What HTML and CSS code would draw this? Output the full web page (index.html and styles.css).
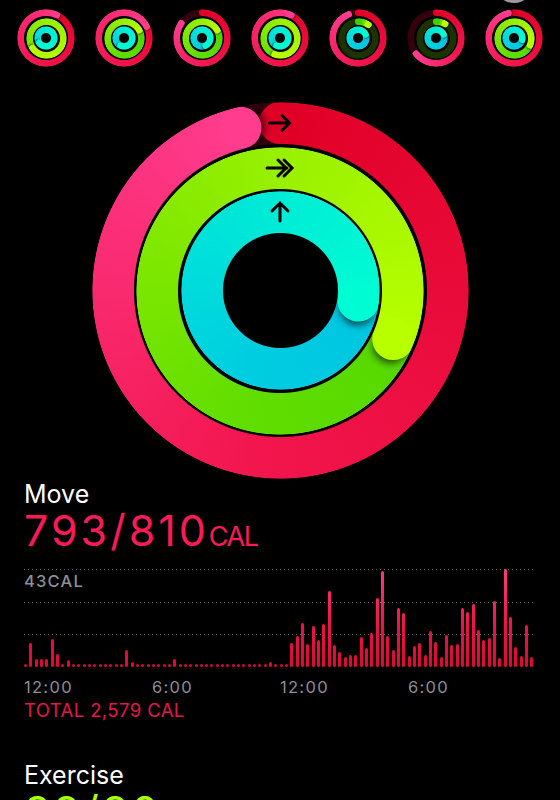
FILE: index.html
```html
<!DOCTYPE html>
<html lang="en">
<head>
<meta charset="utf-8">
<title>Activity</title>
<link rel="stylesheet" href="styles.css">
</head>
<body>
<div class="screen">
  <div class="week">
    <div class="rings small">
      <div class="ring move over" style="--end:24deg"><i class="track"></i><i class="lap1"></i><i class="lap2"></i><i class="cap end"></i></div>
      <div class="ring exercise over" style="--end:235deg"><i class="track"></i><i class="lap1"></i><i class="lap2"></i><i class="cap end"></i></div>
      <div class="ring stand over" style="--end:230deg"><i class="track"></i><i class="lap1"></i><i class="lap2"></i><i class="cap end"></i></div>
    </div>
    <div class="rings small">
      <div class="ring move over" style="--end:62deg"><i class="track"></i><i class="lap1"></i><i class="lap2"></i><i class="cap end"></i></div>
      <div class="ring exercise over" style="--end:60deg"><i class="track"></i><i class="lap1"></i><i class="lap2"></i><i class="cap end"></i></div>
      <div class="ring stand over" style="--end:200deg"><i class="track"></i><i class="lap1"></i><i class="lap2"></i><i class="cap end"></i></div>
    </div>
    <div class="rings small">
      <div class="ring move" style="--end:304deg"><i class="track"></i><i class="lap1"></i><i class="cap start"></i><i class="cap end"></i></div>
      <div class="ring exercise over" style="--end:60deg"><i class="track"></i><i class="lap1"></i><i class="lap2"></i><i class="cap end"></i></div>
      <div class="ring stand over" style="--end:150deg"><i class="track"></i><i class="lap1"></i><i class="lap2"></i><i class="cap end"></i></div>
    </div>
    <div class="rings small">
      <div class="ring move over" style="--end:25deg"><i class="track"></i><i class="lap1"></i><i class="lap2"></i><i class="cap end"></i></div>
      <div class="ring exercise over" style="--end:200deg"><i class="track"></i><i class="lap1"></i><i class="lap2"></i><i class="cap end"></i></div>
      <div class="ring stand over" style="--end:200deg"><i class="track"></i><i class="lap1"></i><i class="lap2"></i><i class="cap end"></i></div>
    </div>
    <div class="rings small">
      <div class="ring move" style="--end:337deg"><i class="track"></i><i class="lap1"></i><i class="cap start"></i><i class="cap end"></i></div>
      <div class="ring exercise" style="--end:35deg"><i class="track"></i><i class="lap1"></i><i class="cap start"></i><i class="cap end"></i></div>
      <div class="ring stand over" style="--end:60deg"><i class="track"></i><i class="lap1"></i><i class="lap2"></i><i class="cap end"></i></div>
    </div>
    <div class="rings small">
      <div class="ring move" style="--end:230deg"><i class="track"></i><i class="lap1"></i><i class="cap start"></i><i class="cap end"></i></div>
      <div class="ring exercise" style="--end:30deg"><i class="track"></i><i class="lap1"></i><i class="cap start"></i><i class="cap end"></i></div>
      <div class="ring stand over" style="--end:60deg"><i class="track"></i><i class="lap1"></i><i class="lap2"></i><i class="cap end"></i></div>
    </div>
    <div class="rings small today">
      <div class="ring move" style="--end:346deg"><i class="track"></i><i class="lap1"></i><i class="cap start"></i><i class="cap end"></i></div>
      <div class="ring exercise over" style="--end:113deg"><i class="track"></i><i class="lap1"></i><i class="lap2"></i><i class="cap end"></i></div>
      <div class="ring stand over" style="--end:97deg"><i class="track"></i><i class="lap1"></i><i class="lap2"></i><i class="cap end"></i></div>
    </div>
  </div>

  <div class="hero">
    <div class="rings big">
      <div class="ring move" style="--end:346deg">
        <i class="track"></i><i class="lap1"></i><i class="cap start"></i><i class="cap end"></i>
        <i class="arrow"><svg viewBox="0 0 42 42"><path d="M10.5 21H30.5M23 13.5L30.5 21L23 28.5"/></svg></i>
      </div>
      <div class="ring exercise over" style="--end:113deg">
        <i class="track"></i><i class="lap1"></i><i class="lap2"></i><i class="cap end"></i>
        <i class="arrow"><svg viewBox="0 0 42 42"><path d="M8 21H28M19 13L27 21L19 29M25 13L33 21L25 29"/></svg></i>
      </div>
      <div class="ring stand over" style="--end:97deg">
        <i class="track"></i><i class="lap1"></i><i class="lap2"></i><i class="cap end"></i>
        <i class="arrow"><svg viewBox="0 0 42 42"><path d="M21 30V12M13 20L21 12L29 20"/></svg></i>
      </div>
    </div>
  </div>

  <section class="stat">
    <div class="label">Move</div>
    <div class="value move-c">793/810<span class="unit">CAL</span></div>
    <div class="chart">
      <div class="grid">
        <div class="gl"><span class="ymax">43CAL</span></div>
        <div class="gl"></div>
        <div class="gl"></div>
      </div>
      <div class="bars">
        <i style="height:3px"></i><i style="height:24px"></i><i style="height:8px"></i><i style="height:8px"></i><i style="height:8px"></i><i style="height:28px"></i><i style="height:13px"></i><i style="height:3px"></i>
        <i style="height:7px"></i><i style="height:3px"></i><i style="height:3px"></i><i style="height:3px"></i><i style="height:3px"></i><i style="height:3px"></i><i style="height:3px"></i><i style="height:3px"></i>
        <i style="height:3px"></i><i style="height:3px"></i><i style="height:3px"></i><i style="height:17px"></i><i style="height:5px"></i><i style="height:3px"></i><i style="height:3px"></i><i style="height:3px"></i>
        <i style="height:3px"></i><i style="height:3px"></i><i style="height:3px"></i><i style="height:3px"></i><i style="height:8px"></i><i style="height:3px"></i><i style="height:3px"></i><i style="height:3px"></i>
        <i style="height:3px"></i><i style="height:3px"></i><i style="height:3px"></i><i style="height:3px"></i><i style="height:3px"></i><i style="height:3px"></i><i style="height:3px"></i><i style="height:3px"></i>
        <i style="height:3px"></i><i style="height:3px"></i><i style="height:3px"></i><i style="height:3px"></i><i style="height:3px"></i><i style="height:3px"></i><i style="height:5px"></i><i style="height:3px"></i>
        <i style="height:3px"></i><i style="height:3px"></i><i style="height:24px"></i><i style="height:31px"></i><i style="height:44px"></i><i style="height:23px"></i><i style="height:41px"></i><i style="height:27px"></i>
        <i style="height:43px"></i><i style="height:76px"></i><i style="height:22px"></i><i style="height:15px"></i><i style="height:10px"></i><i style="height:12px"></i><i style="height:12px"></i><i style="height:30px"></i>
        <i style="height:19px"></i><i style="height:34px"></i><i style="height:69px"></i><i style="height:96px"></i><i style="height:31px"></i><i style="height:17px"></i><i style="height:59px"></i><i style="height:54px"></i>
        <i style="height:11px"></i><i style="height:21px"></i><i style="height:24px"></i><i style="height:12px"></i><i style="height:36px"></i><i style="height:25px"></i><i style="height:10px"></i><i style="height:32px"></i>
        <i style="height:22px"></i><i style="height:23px"></i><i style="height:59px"></i><i style="height:55px"></i><i style="height:63px"></i><i style="height:37px"></i><i style="height:27px"></i><i style="height:29px"></i>
        <i style="height:66px"></i><i style="height:9px"></i><i style="height:98px"></i><i style="height:50px"></i><i style="height:20px"></i><i style="height:11px"></i><i style="height:42px"></i><i style="height:10px"></i>
      </div>
    </div>
    <div class="axis"><span>12:00</span><span>6:00</span><span>12:00</span><span>6:00</span></div>
    <div class="total">TOTAL 2,579 CAL</div>
  </section>

  <section class="stat next">
    <div class="label">Exercise</div>
    <div class="value ex-c">39/30<span class="unit">MIN</span></div>
  </section>
</div>
</body>
</html>
```

FILE: styles.css
```css
* { box-sizing: border-box; margin: 0; padding: 0; }

html, body { background: #000; }

body {
  width: 560px;
  height: 800px;
  overflow: hidden;
  font-family: Inter, "Liberation Sans", sans-serif;
  color: #fff;
}

.screen { width: 560px; }

/* ---------- week strip ---------- */
.week {
  position: relative;
  display: flex;
  gap: 20px;
  padding: 9px 0 0 17px;
}

.today::before {
  content: "";
  position: absolute;
  left: 494px;
  top: -37px;
  width: 40px;
  height: 40px;
  border-radius: 50%;
  background: #9c9ca0;
}

/* ---------- rings ---------- */
.rings {
  display: grid;
  place-items: center;
}

.rings > .ring { grid-area: 1 / 1; }

.ring {
  display: grid;
  width: var(--d);
  height: var(--d);
  -webkit-mask: radial-gradient(closest-side, transparent calc(100% - var(--w) - 0.5px), #000 calc(100% - var(--w) + 0.5px), #000 calc(100% - 0.8px), transparent 100%);
  mask: radial-gradient(closest-side, transparent calc(100% - var(--w) - 0.5px), #000 calc(100% - var(--w) + 0.5px), #000 calc(100% - 0.8px), transparent 100%);
}

.ring > i {
  grid-area: 1 / 1;
  width: 100%;
  height: 100%;
  border-radius: 50%;
}

.move {
  --s: #e00026;
  --m: #f2164e;
  --x: #ff2f7a;
  --e: #ff3c8e;
  --track: #33000c;
}

.exercise {
  --s: #44d000;
  --m: #62de00;
  --x: #98f000;
  --e: #b8ff00;
  --track: #1a3300;
}

.stand {
  --s: #00bde2;
  --m: #00cde0;
  --x: #00ecd6;
  --e: #00fcd2;
  --track: #003a3f;
}

.track { background: var(--track); }

.lap1 {
  background: conic-gradient(var(--s) 0deg, var(--m) calc(var(--end) * 0.55), var(--e) var(--end), transparent 0);
}

.over .lap1 {
  background: conic-gradient(var(--s) 0deg, var(--m) 200deg, var(--x) 360deg);
}

.lap2 {
  background: conic-gradient(var(--x) 0deg, var(--e) var(--end), transparent 0);
}

.ring > .cap {
  display: flex;
  justify-content: center;
  border-radius: 0;
}

.cap::before {
  content: "";
  width: var(--w);
  height: var(--w);
  border-radius: 50%;
  background: var(--cc);
}

.cap.start { --cc: var(--s); }

.cap.end {
  --cc: var(--e);
  transform: rotate(var(--end));
}

.big .cap.end::before { box-shadow: 7px 0 7px -3px rgba(0, 0, 0, 0.6); }
.small .cap.end::before { box-shadow: 1.5px 0 1.5px -0.5px rgba(0, 0, 0, 0.5); }

.ring > .arrow {
  display: flex;
  justify-content: center;
  border-radius: 0;
}

.arrow svg {
  width: var(--w);
  height: var(--w);
  fill: none;
  stroke: #000;
  stroke-width: 3;
  stroke-linecap: round;
}

.big { --w: 42px; }
.big .move { --d: 377px; }
.big .exercise { --d: 288px; }
.big .stand { --d: 199px; }

.small { --w: 7px; }
.small .move { --d: 58px; }
.small .exercise { --d: 41px; }
.small .stand { --d: 24px; }

/* ---------- hero ---------- */
.hero {
  display: flex;
  justify-content: center;
  margin-top: 35px;
}

/* ---------- stats ---------- */
.stat { padding-left: 24px; }

.label {
  margin-top: 1px;
  font-size: 25px;
  line-height: 28px;
  color: #fff;
}

.value {
  font-size: 43px;
  line-height: 44px;
  letter-spacing: 3px;
}

.unit {
  font-size: 27px;
  line-height: 1;
  letter-spacing: -1.5px;
}

.move-c { color: #fa1a56; }
.ex-c { color: #a8ff00; }

.chart {
  display: grid;
  width: 512px;
  height: 98px;
  margin-top: 17px;
}

.chart > * { grid-area: 1 / 1; }

.gl {
  height: 32.67px;
  background: linear-gradient(to right, #5c5c5c 1px, transparent 1px) 0 0 / 4px 1px repeat-x;
}

.ymax {
  display: block;
  padding-top: 4px;
  font-size: 16.5px;
  line-height: 16px;
  font-weight: 500;
  letter-spacing: 1.2px;
  color: #8e8e93;
}

.bars {
  display: flex;
  justify-content: space-between;
  align-items: flex-end;
  width: 510px;
  height: 98px;
}

.bars i {
  display: block;
  width: 3px;
  border-radius: 1.5px;
  background: linear-gradient(to top, #dc0935 0, #ee1246 40px, #ff3a7e 98px) bottom / 3px 98px no-repeat;
}

.axis {
  display: grid;
  grid-template-columns: repeat(4, 128px);
  margin-top: 10px;
  font-size: 16.5px;
  line-height: 20px;
  letter-spacing: 1.3px;
  color: #8e8e93;
}

.total {
  margin-top: 2.3px;
  font-size: 18.5px;
  line-height: 22px;
  letter-spacing: 0.4px;
  color: #e3164c;
}

.next { margin-top: 39.5px; }
```
